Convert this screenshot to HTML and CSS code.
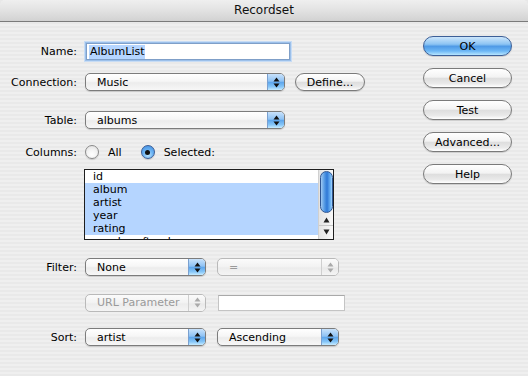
FILE: index.html
```html
<!DOCTYPE html>
<html>
<head>
<meta charset="utf-8">
<title>Recordset</title>
<link rel="stylesheet" href="styles.css">
</head>
<body>
<div class="window">
  <div class="titlebar">Recordset</div>
  <div class="content">
    <div class="form">
      <div class="row r-name">
        <div class="label">Name:</div>
        <div class="field focus"><span class="sel">AlbumList</span></div>
      </div>
      <div class="row r-conn">
        <div class="label">Connection:</div>
        <div class="popup wide"><span class="ptext">Music</span><span class="parrow"><svg width="7" height="11" viewBox="0 0 7 11"><path d="M3.5 0.5 L6.5 4.5 H0.5Z M3.5 10.5 L6.5 6.5 H0.5Z" fill="#111"/></svg></span></div>
        <div class="btn define">Define...</div>
      </div>
      <div class="row r-table">
        <div class="label">Table:</div>
        <div class="popup wide"><span class="ptext">albums</span><span class="parrow"><svg width="7" height="11" viewBox="0 0 7 11"><path d="M3.5 0.5 L6.5 4.5 H0.5Z M3.5 10.5 L6.5 6.5 H0.5Z" fill="#111"/></svg></span></div>
      </div>
      <div class="row r-cols">
        <div class="label">Columns:</div>
        <span class="radio"></span><span class="rlabel">All</span>
        <span class="radio on"><span class="dot"></span></span><span class="rlabel">Selected:</span>
      </div>
      <div class="row r-list">
        <div class="label"></div>
        <div class="listbox">
          <div class="items">
            <div class="item">id</div>
            <div class="item hl">album</div>
            <div class="item hl">artist</div>
            <div class="item hl">year</div>
            <div class="item hl">rating</div>
            <div class="item">numberoftracks</div>
          </div>
          <div class="scroll">
            <div class="thumb"></div>
            <div class="sarrow up"><svg width="7" height="6" viewBox="0 0 7 6"><path d="M3.5 0.5 L6.5 5.5 H0.5Z" fill="#222"/></svg></div>
            <div class="sarrow down"><svg width="7" height="6" viewBox="0 0 7 6"><path d="M3.5 5.5 L6.5 0.5 H0.5Z" fill="#222"/></svg></div>
          </div>
        </div>
      </div>
      <div class="row r-filter">
        <div class="label">Filter:</div>
        <div class="popup narrow"><span class="ptext">None</span><span class="parrow"><svg width="7" height="11" viewBox="0 0 7 11"><path d="M3.5 0.5 L6.5 4.5 H0.5Z M3.5 10.5 L6.5 6.5 H0.5Z" fill="#111"/></svg></span></div>
        <div class="popup narrow2 disabled"><span class="ptext">=</span><span class="parrow"><svg width="7" height="11" viewBox="0 0 7 11"><path d="M3.5 0.5 L6.5 4.5 H0.5Z M3.5 10.5 L6.5 6.5 H0.5Z" fill="#aaa"/></svg></span></div>
      </div>
      <div class="row r-url">
        <div class="label"></div>
        <div class="popup narrow disabled"><span class="ptext">URL Parameter</span><span class="parrow"><svg width="7" height="11" viewBox="0 0 7 11"><path d="M3.5 0.5 L6.5 4.5 H0.5Z M3.5 10.5 L6.5 6.5 H0.5Z" fill="#aaa"/></svg></span></div>
        <div class="field url"></div>
      </div>
      <div class="row r-sort">
        <div class="label">Sort:</div>
        <div class="popup narrow"><span class="ptext">artist</span><span class="parrow"><svg width="7" height="11" viewBox="0 0 7 11"><path d="M3.5 0.5 L6.5 4.5 H0.5Z M3.5 10.5 L6.5 6.5 H0.5Z" fill="#111"/></svg></span></div>
        <div class="popup narrow2"><span class="ptext">Ascending</span><span class="parrow"><svg width="7" height="11" viewBox="0 0 7 11"><path d="M3.5 0.5 L6.5 4.5 H0.5Z M3.5 10.5 L6.5 6.5 H0.5Z" fill="#111"/></svg></span></div>
      </div>
    </div>
    <div class="buttons">
      <div class="btn side default">OK</div>
      <div class="btn side">Cancel</div>
      <div class="btn side">Test</div>
      <div class="btn side">Advanced...</div>
      <div class="btn side">Help</div>
    </div>
  </div>
</div>
</body>
</html>
```
FILE: styles.css
```css
* { box-sizing: border-box; }
html, body { margin: 0; padding: 0; }
body {
  width: 528px;
  height: 376px;
  overflow: hidden;
  font-family: "DejaVu Sans", "Liberation Sans", sans-serif;
  font-size: 11px;
  color: #000;
  background: #e8e8e8;
}
.window {
  width: 528px;
  height: 376px;
  background: repeating-linear-gradient(to bottom, #efefef 0px, #efefef 2px, #e9e9e9 2px, #e9e9e9 4px);
  border-radius: 5px 5px 0 0;
  overflow: hidden;
}
.titlebar {
  height: 22px;
  line-height: 21px;
  text-align: center;
  font-size: 12px;
  color: #111;
  background: linear-gradient(to bottom, #efefef 0%, #e2e2e2 50%, #d2d2d2 100%);
  border-bottom: 1px solid #7b7b7b;
  border-radius: 5px 5px 0 0;
}
.content {
  display: flex;
}
.form {
  flex: 1;
  display: flex;
  flex-direction: column;
}
.row {
  display: flex;
  align-items: center;
}
.label {
  width: 77px;
  margin-right: 8px;
  text-align: right;
  white-space: nowrap;
}
.r-name { margin-top: 21px; height: 17px; }
.r-conn { margin-top: 13px; height: 18px; }
.r-table { margin-top: 20px; height: 18px; }
.r-cols { margin-top: 15px; height: 16px; }
.r-list { margin-top: 9px; align-items: flex-start; }
.r-list .label { width: 76px; }
.r-filter { margin-top: 18px; height: 18px; }
.r-url { margin-top: 18px; height: 17px; }
.r-sort { margin-top: 17px; height: 18px; }

.field {
  background: #fff;
  border: 1px solid #9b9b9b;
  border-top-color: #7e7e7e;
  height: 17px;
  padding-left: 2px;
  display: flex;
  align-items: center;
}
.field.focus {
  width: 204px;
  margin-left: 1px;
  border-color: #7f9fc8;
  box-shadow: 0 0 0 1px #9cc0ea, 0 0 0 2px #c7dcf5;
}
.sel {
  background: #b5d5ff;
  padding: 0 1px;
  line-height: 14px;
}
.field.url {
  width: 127px;
  height: 16px;
  margin-left: 12px;
  border-color: #c4c4c4;
  border-top-color: #a9a9a9;
}

.popup {
  position: relative;
  height: 18px;
  border: 1px solid #7c7c7c;
  border-radius: 5px;
  background: linear-gradient(to bottom, #ffffff 0%, #f6f6f6 45%, #ececec 55%, #f7f7f7 100%);
  display: flex;
  align-items: center;
  overflow: hidden;
  box-shadow: 0 1px 1px rgba(0,0,0,0.15);
}
.popup.wide { width: 200px; }
.popup.narrow { width: 121px; }
.popup.narrow2 { width: 122px; margin-left: 11px; }
.ptext {
  flex: 1;
  padding-left: 11px;
  white-space: nowrap;
}
.parrow {
  width: 17px;
  height: 100%;
  display: flex;
  align-items: center;
  justify-content: center;
  border-left: 1px solid #7aa0d0;
  background: linear-gradient(to bottom, #c9e2fb 0%, #8ec2f4 45%, #5ea6ec 52%, #86c6f8 80%, #c8ecff 100%);
}
.popup.disabled {
  border-color: #b9b9b9;
  color: #9a9a9a;
  box-shadow: none;
  background: linear-gradient(to bottom, #fbfbfb 0%, #f2f2f2 50%, #ececec 55%, #f4f4f4 100%);
}
.popup.disabled .parrow {
  border-left: 1px solid #cfcfcf;
  background: linear-gradient(to bottom, #fbfbfb 0%, #f0f0f0 50%, #e9e9e9 55%, #f4f4f4 100%);
}

.btn {
  height: 18px;
  border: 1px solid #7a7a7a;
  border-radius: 9px;
  display: flex;
  align-items: center;
  justify-content: center;
  background: linear-gradient(to bottom, #ffffff 0%, #f3f3f3 45%, #dedede 52%, #e9e9e9 80%, #ffffff 100%);
  box-shadow: 0 1px 1px rgba(0,0,0,0.15);
  white-space: nowrap;
}
.btn.define {
  width: 70px;
  margin-left: 10px;
}
.buttons {
  width: 89px;
  margin-right: 16px;
  margin-top: 14px;
  display: flex;
  flex-direction: column;
  gap: 12px;
}
.btn.side {
  height: 20px;
  border-radius: 10px;
}
.btn.default {
  border-color: #3d5f97;
  background: linear-gradient(to bottom, #cde6fb 0%, #8cc4f3 40%, #4f9ae6 52%, #6db7f5 78%, #b7e6ff 100%);
}

.radio {
  width: 14px;
  height: 14px;
  border-radius: 50%;
  border: 1px solid #8a8a8a;
  background: radial-gradient(circle at 50% 70%, #ffffff 0%, #f2f2f2 50%, #dcdcdc 100%);
  box-shadow: 0 1px 1px rgba(0,0,0,0.15);
  display: flex;
  align-items: center;
  justify-content: center;
}
.radio.on {
  margin-left: 19px;
  border-color: #3b5d95;
  background: radial-gradient(circle at 50% 75%, #bfe6ff 0%, #6cb4f3 45%, #3d8ae0 100%);
}
.dot {
  width: 5px;
  height: 5px;
  border-radius: 50%;
  background: #111;
}
.rlabel {
  margin-left: 9px;
}

.listbox {
  width: 250px;
  height: 71px;
  border: 1px solid #1e1e1e;
  background: #fff;
  display: flex;
  overflow: hidden;
}
.items {
  flex: 1;
  overflow: hidden;
}
.item {
  height: 13px;
  line-height: 13px;
  padding-left: 8px;
  white-space: nowrap;
}
.item.hl { background: #b5d5ff; }
.scroll {
  width: 15px;
  border-left: 1px solid #d0d0d0;
  background: linear-gradient(to right, #e4e4e4, #f8f8f8);
  display: flex;
  flex-direction: column;
  align-items: center;
}
.thumb {
  margin-top: 1px;
  width: 13px;
  height: 42px;
  border-radius: 7px;
  border: 1px solid #2f5591;
  background: linear-gradient(to right, #9fc9f2 0%, #4d95e2 35%, #2f78d6 55%, #6ab2f4 85%, #a6d4fb 100%);
}
.sarrow {
  width: 14px;
  height: 12px;
  display: flex;
  align-items: center;
  justify-content: center;
}
.sarrow.up { margin-top: 1px; border-bottom: 1px solid #c8c8c8; }
```
